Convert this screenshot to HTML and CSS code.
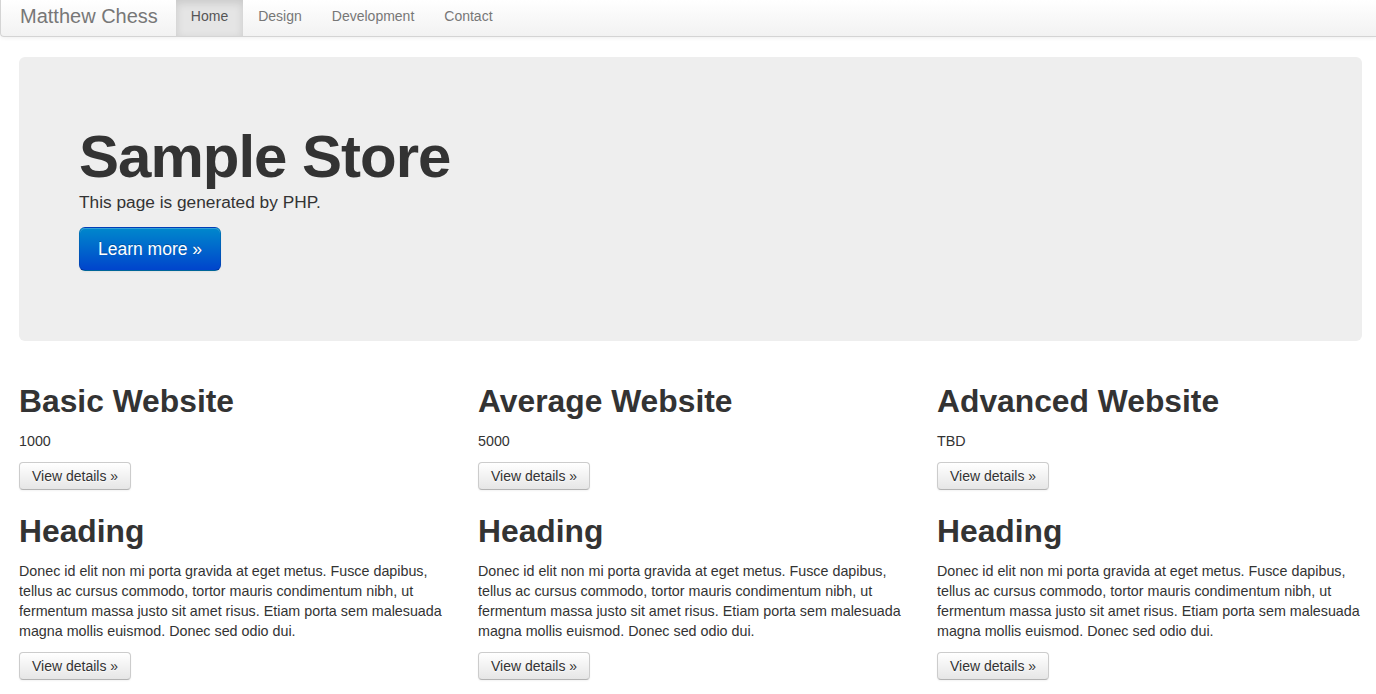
FILE: index.html
```html
<!DOCTYPE html>
<html lang="en">
<head>
<meta charset="utf-8">
<title>Matthew Chess</title>
<link rel="stylesheet" href="styles.css">
</head>
<body>
<div class="navbar">
  <a class="brand" href="#">Matthew Chess</a>
  <ul class="nav">
    <li class="active"><a href="#">Home</a></li>
    <li><a href="#">Design</a></li>
    <li><a href="#">Development</a></li>
    <li><a href="#">Contact</a></li>
  </ul>
</div>
<div class="container">
  <div class="hero">
    <h1>Sample Store</h1>
    <p class="lead">This page is generated by PHP.</p>
    <p class="lead-action"><a class="btn btn-primary btn-large" href="#">Learn more »</a></p>
  </div>
  <div class="row">
    <div class="span">
      <h2>Basic Website</h2>
      <p>1000</p>
      <p class="actions"><a class="btn" href="#">View details »</a></p>
    </div>
    <div class="span">
      <h2>Average Website</h2>
      <p>5000</p>
      <p class="actions"><a class="btn" href="#">View details »</a></p>
    </div>
    <div class="span">
      <h2>Advanced Website</h2>
      <p>TBD</p>
      <p class="actions"><a class="btn" href="#">View details »</a></p>
    </div>
    <div class="span">
      <h2>Heading</h2>
      <p>Donec id elit non mi porta gravida at eget metus. Fusce dapibus, tellus ac cursus commodo, tortor mauris condimentum nibh, ut fermentum massa justo sit amet risus. Etiam porta sem malesuada magna mollis euismod. Donec sed odio dui.</p>
      <p class="actions"><a class="btn" href="#">View details »</a></p>
    </div>
    <div class="span">
      <h2>Heading</h2>
      <p>Donec id elit non mi porta gravida at eget metus. Fusce dapibus, tellus ac cursus commodo, tortor mauris condimentum nibh, ut fermentum massa justo sit amet risus. Etiam porta sem malesuada magna mollis euismod. Donec sed odio dui.</p>
      <p class="actions"><a class="btn" href="#">View details »</a></p>
    </div>
    <div class="span">
      <h2>Heading</h2>
      <p>Donec id elit non mi porta gravida at eget metus. Fusce dapibus, tellus ac cursus commodo, tortor mauris condimentum nibh, ut fermentum massa justo sit amet risus. Etiam porta sem malesuada magna mollis euismod. Donec sed odio dui.</p>
      <p class="actions"><a class="btn" href="#">View details »</a></p>
    </div>
  </div>
</div>
</body>
</html>
```

FILE: styles.css
```css
* { box-sizing: border-box; }
html, body { margin: 0; padding: 0; }
body {
  font-family: "Liberation Sans", Arial, sans-serif;
  font-size: 14px;
  line-height: 20px;
  color: #333;
  background: #fff;
  overflow: hidden;
}
a { text-decoration: none; }
p { margin: 0 0 10px; }

.navbar {
  display: flex;
  align-items: stretch;
  height: 37px;
  padding: 0 20px;
  background: linear-gradient(to bottom, #ffffff, #f2f2f2);
  border-bottom: 1px solid #d4d4d4;
  border-left: 1px solid #d4d4d4;
  border-radius: 0 0 0 4px;
  box-shadow: 0 1px 4px rgba(0,0,0,0.065);
  margin-bottom: 20px;
}
.brand {
  display: block;
  margin-left: -20px;
  padding: 4px 18px 0 19px;
  font-size: 20px;
  line-height: 24px;
  font-weight: 200;
  color: #777;
}
.nav {
  display: flex;
  list-style: none;
  margin: 0;
  padding: 0;
}
.nav a {
  display: block;
  height: 36px;
  padding: 6px 15px 10px;
  line-height: 20px;
  font-size: 14px;
  color: #777;
}
.nav .active a {
  color: #555;
  background: #e5e5e5;
  box-shadow: inset 0 3px 8px rgba(0,0,0,0.125);
}

.container {
  padding: 0 14px 0 19px;
}
.hero {
  padding: 60px;
  background: #eee;
  border-radius: 6px;
  margin-bottom: 30px;
}
.hero h1 {
  margin: 10px 0 0;
  font-size: 60px;
  line-height: 60px;
  font-weight: bold;
  letter-spacing: -1px;
  color: #333;
}
.hero .lead {
  font-size: 17.3px;
  line-height: 30px;
  font-weight: 200;
  margin: 0 0 10px;
}
.hero .lead-action { margin: 0 0 10px; }

.row {
  display: grid;
  grid-template-columns: 430px 430px 1fr;
  column-gap: 29px;
}
.span h2 {
  margin: 10px 0;
  font-size: 31.8px;
  line-height: 40px;
  font-weight: bold;
  color: #333;
}
.span p { font-size: 14.3px; }
.span .actions {
  height: 30px;
  padding-top: 1px;
}

.btn {
  display: inline-block;
  padding: 3px 12px;
  font-size: 14px;
  line-height: 20px;
  color: #333;
  text-align: center;
  text-shadow: 0 1px 1px rgba(255,255,255,0.75);
  background: linear-gradient(to bottom, #ffffff, #e6e6e6);
  border: 1px solid #ccc;
  border-bottom-color: #b3b3b3;
  border-radius: 4px;
  box-shadow: inset 0 1px 0 rgba(255,255,255,0.2), 0 1px 2px rgba(0,0,0,0.05);
  vertical-align: top;
}
.btn-large {
  padding: 11px 18px;
  font-size: 17.5px;
  border-radius: 6px;
}
.btn-primary {
  color: #fff;
  text-shadow: 0 -1px 0 rgba(0,0,0,0.25);
  background: linear-gradient(to bottom, #0088cc, #0044cc);
  border-color: rgba(0,0,0,0.1) rgba(0,0,0,0.1) rgba(0,0,0,0.25);
}
```
